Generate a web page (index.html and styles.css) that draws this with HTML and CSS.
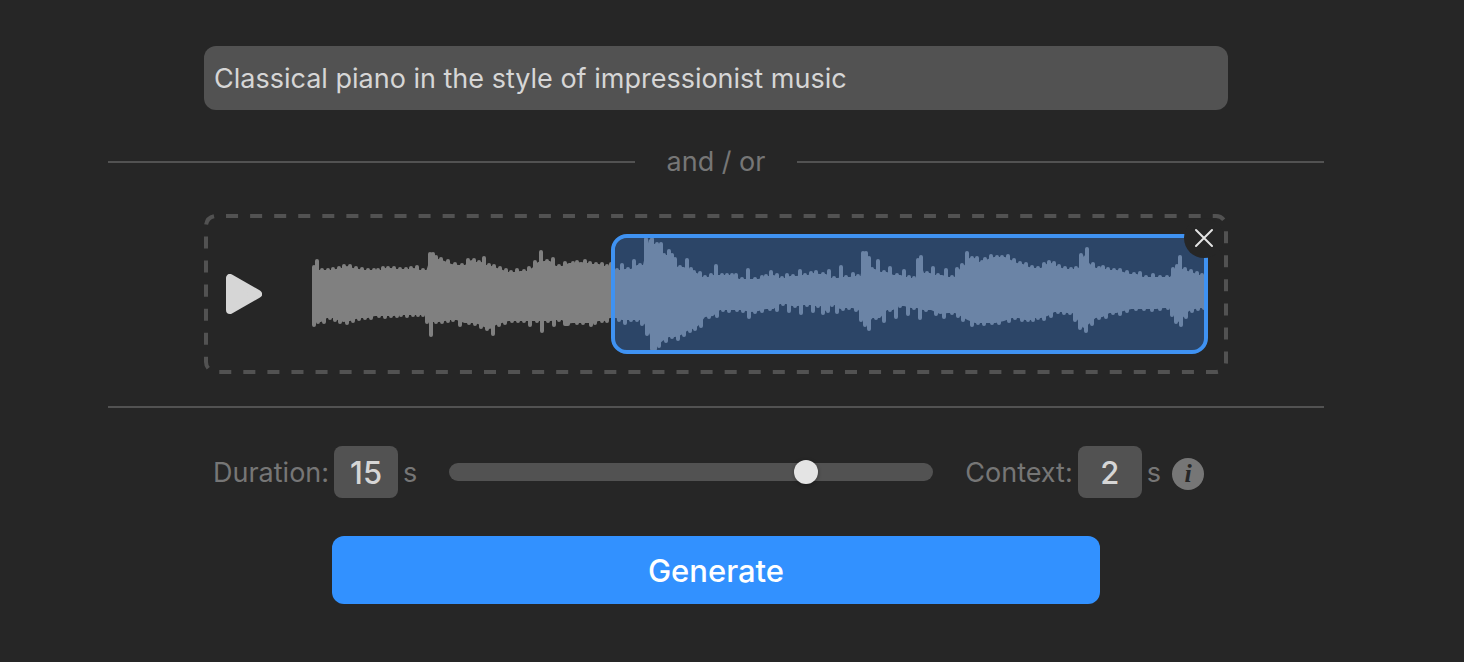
FILE: index.html
```html
<!DOCTYPE html>
<html lang="en">
<head>
<meta charset="utf-8">
<meta name="viewport" content="width=device-width, initial-scale=1">
<title>Generate music</title>
<link rel="stylesheet" href="styles.css">
</head>
<body>
<main class="page">
  <form class="generator" onsubmit="return false">
    <input class="prompt" type="text" aria-label="Prompt" value="Classical piano in the style of impressionist music">

    <div class="divider">and / or</div>

    <section class="clip" aria-label="Audio clip">
      <svg class="clip-outline" aria-hidden="true"><rect class="clip-dashes" x="2" y="2" rx="10" pathLength="2328"/></svg>
      <button class="play" type="button" aria-label="Play">
        <svg width="36" height="40" viewBox="0 0 36 40"><path d="M4 4V36L32 20Z" fill="#d6d6d6" stroke="#d6d6d6" stroke-width="8" stroke-linejoin="round"/></svg>
      </button>
      <div class="wave">
        <svg class="wave-shape" viewBox="0 0 896 120" preserveAspectRatio="none" aria-hidden="true">
          <path id="wave-body" fill="#808080"/>
          <path id="wave-bars" fill="none" stroke="#808080" stroke-width="4" stroke-linecap="round"/>
        </svg>
        <div class="selection"></div>
        <button class="remove" type="button" aria-label="Remove clip">
          <svg width="20" height="20" viewBox="0 0 20 20"><path d="M2 2L18 18M18 2L2 18" stroke="#e4e4e4" stroke-width="2" stroke-linecap="round"/></svg>
        </button>
      </div>
    </section>

    <hr class="rule">

    <div class="settings">
      <div class="field">
        <label for="duration">Duration:</label>
        <input class="number" id="duration" type="text" inputmode="numeric" value="15">
        <span>s</span>
      </div>
      <input class="slider" type="range" aria-label="Duration" min="0" max="20" value="15">
      <div class="field">
        <label for="context">Context:</label>
        <input class="number" id="context" type="text" inputmode="numeric" value="2">
        <span>s</span>
        <button class="info" type="button" aria-label="About context">i</button>
      </div>
    </div>

    <button class="generate" type="submit">Generate</button>
  </form>
</main>
<script src="wave.js"></script>
</body>
</html>
```

FILE: styles.css
```css
* {
  box-sizing: border-box;
}

body {
  margin: 0;
  min-height: 100vh;
  background: #262626;
  color: #767676;
  font-family: Inter, "Liberation Sans", sans-serif;
  font-size: 27px;
}

button,
input {
  margin: 0;
  border: 0;
  font: inherit;
}

button {
  padding: 0;
  background: none;
  cursor: pointer;
}

.page {
  padding: 46px 64px 58px 32px;
}

.generator {
  display: flex;
  flex-direction: column;
  max-width: 1216px;
  margin: 0 auto;
}

.prompt {
  height: 64px;
  margin: 0 96px;
  padding: 0 10px;
  border-radius: 12px;
  background: #525252;
  color: #d6d6d6;
}

.divider {
  display: flex;
  align-items: center;
  gap: 32px;
  margin: 32px 0;
  line-height: 40px;
}

.divider::before,
.divider::after {
  content: "";
  flex: 1;
  height: 2px;
  background: #525252;
}

.clip {
  position: relative;
  display: flex;
  align-items: center;
  gap: 50px;
  height: 160px;
  margin: 0 96px;
  padding: 20px 20px 20px 22px;
}

.clip-outline {
  position: absolute;
  inset: 0;
  width: 100%;
  height: 100%;
  pointer-events: none;
}

.clip-dashes {
  width: calc(100% - 4px);
  height: calc(100% - 4px);
  fill: none;
  stroke: #525252;
  stroke-width: 4;
  stroke-dasharray: 12 12;
  stroke-dashoffset: -10;
}

.play {
  display: flex;
}

.wave {
  position: relative;
  flex: 1;
  height: 120px;
}

.wave-shape {
  display: block;
  width: 100%;
  height: 100%;
}

.selection {
  position: absolute;
  inset: 0 0 0 33.4%;
  border: 4px solid #3f92f2;
  border-radius: 16px;
  background: rgba(60, 144, 255, 0.3);
  background-clip: padding-box;
}

.remove {
  position: absolute;
  top: -16px;
  right: -16px;
  display: grid;
  place-items: center;
  width: 40px;
  height: 40px;
  border-radius: 50%;
  background: #262626;
}

.rule {
  width: 100%;
  height: 2px;
  margin: 32px 0 38px;
  border: 0;
  background: #525252;
}

.settings {
  display: flex;
  align-items: center;
  gap: 32px;
  margin: 0 120px 0 105px;
}

.field {
  display: flex;
  align-items: center;
  gap: 5px;
}

.number {
  width: 64px;
  height: 52px;
  padding: 0;
  border-radius: 8px;
  background: #525252;
  color: #d6d6d6;
  font-size: 31px;
  font-weight: 500;
  text-align: center;
}

.slider {
  flex: 1;
  min-width: 0;
  height: 18px;
  border-radius: 9px;
  background: #525252;
  appearance: none;
}

.slider::-webkit-slider-thumb {
  width: 24px;
  height: 24px;
  border-radius: 50%;
  background: #e4e4e4;
  box-shadow: 0 1px 4px rgba(0, 0, 0, 0.3);
  appearance: none;
}

.info {
  width: 32px;
  height: 32px;
  margin: 4px 0 0 6px;
  border-radius: 50%;
  background: #767676;
  color: #262626;
  font-family: "Liberation Serif", serif;
  font-size: 26px;
  font-style: italic;
  font-weight: 700;
  line-height: 32px;
}

.generate {
  height: 68px;
  margin: 38px 224px 0;
  border-radius: 12px;
  background: #3291ff;
  color: #fff;
  font-size: 31px;
  font-weight: 500;
}
```

FILE: wave.js
```js
// Peak positions of the clip, as x,y pairs in a 896 x 120 box.
const upper = `2,31 5,25 10,34 16,34 21,33 27,32 32,30 38,30 44,32 50,33 56,34 62,34 66,34 71,32 76,32 82,32 88,33
94,33 99,32 105,31 111,34 118,18 121,18 124,21 129,23 136,25 143,28 150,29 156,24 162,24 167,26 172,22 177,29 182,30
188,32 194,34 199,36 205,34 212,35 217,32 223,26 229,16 235,25 241,23 247,30 253,27 261,27 265,26 273,25 278,27
284,28 290,28 295,30 299,28 305,34 310,29 316,33 322,25 328,29 334,3 340,3 345,8 349,8 352,19 357,15 360,19 363,23
368,31 375,24 379,33 382,36 388,37 393,41 399,39 404,30 410,39 415,39 420,39 424,39 430,43 436,34 443,43 450,41
454,40 459,36 465,39 470,42 475,39 481,40 488,35 493,39 499,37 504,36 511,38 517,35 522,42 529,31 534,41 541,38
546,40 551,17 554,17 557,22 560,33 566,25 572,36 578,32 585,39 592,35 597,41 602,42 606,24 609,21 615,37 621,32
626,39 634,34 640,41 645,33 650,29 655,17 660,22 665,22 670,26 673,23 679,20 685,21 690,21 696,20 702,24 708,27
714,28 720,31 726,32 732,28 737,26 742,27 747,30 753,32 759,33 764,32 769,19 775,13 781,28 787,32 791,31 796,33
802,34 808,34 815,36 822,38 828,37 834,41 841,39 848,41 855,41 861,33 865,30 868,21 873,33 879,35 885,37 890,39 894,39`;

const lower = `2,93 6,90 12,90 18,86 23,88 28,90 35,91 41,89 47,87 53,86 59,86 67,84 73,85 79,84 85,84 89,83 95,84
101,83 106,83 111,83 115,90 119,103 124,90 130,90 136,89 141,88 148,93 157,91 163,92 169,95 175,97 181,102 187,93
193,91 200,89 206,89 212,89 218,93 225,89 230,99 236,89 242,93 247,88 253,92 256,92 265,91 271,91 279,93 283,91
290,89 295,89 301,86 307,88 313,91 319,88 325,88 330,92 335,102 340,117 343,117 347,114 354,109 360,105 366,107
372,103 378,99 383,97 389,94 397,85 405,84 411,78 417,79 425,78 431,79 437,85 443,80 450,79 458,77 465,78 471,72
477,79 483,74 489,81 495,73 501,79 506,74 511,81 516,79 520,73 525,80 531,77 537,76 544,78 549,88 553,93 557,97
564,86 572,89 578,78 584,85 588,74 596,82 602,76 608,86 614,78 624,82 632,85 640,81 646,84 651,88 660,93 666,91
672,92 680,91 687,91 697,89 703,86 710,88 716,88 721,88 726,86 732,87 739,84 746,80 752,81 758,81 763,88 768,96
774,99 780,92 787,86 794,85 801,81 808,82 815,79 824,77 832,77 840,78 848,77 856,76 860,83 864,90 869,93 874,85
880,79 886,77 892,76`;

const parse = (text) => text.trim().split(/\s+/).map((pair) => pair.split(",").map(Number));
const tops = parse(upper);
const bottoms = parse(lower);

// The solid body runs through the valleys, a little inside the lower of two neighbouring peaks.
const valleys = (peaks, inner, step) =>
  peaks.slice(1).map(([x, y], i) => [(x + peaks[i][0]) / 2, inner(y, peaks[i][1]) + step]);

const outline = [
  [0, 36],
  ...valleys(tops, Math.max, 2),
  [896, 40],
  [896, 76],
  ...valleys(bottoms, Math.min, -2).reverse(),
  [0, 88],
];

const bars = [
  ...tops.map(([x, y]) => `M${x} ${y + 2}V60`),
  ...bottoms.map(([x, y]) => `M${x} ${y - 2}V60`),
];

document.getElementById("wave-body").setAttribute("d", "M" + outline.map((p) => p.join(" ")).join("L") + "Z");
document.getElementById("wave-bars").setAttribute("d", bars.join(""));
```
